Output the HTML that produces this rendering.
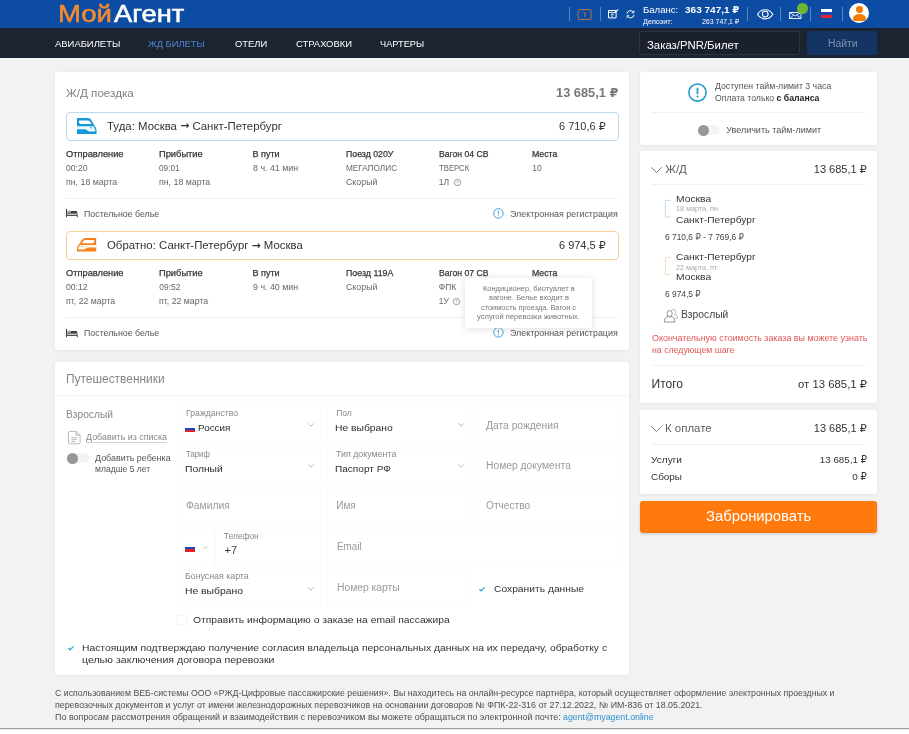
<!DOCTYPE html>
<html lang="ru">
<head>
<meta charset="utf-8">
<title>МойАгент — Ж/Д поездка</title>
<style>
html,body{margin:0;padding:0}
body{width:909px;height:734px;overflow:hidden;position:relative;background:#f2f2f2;font-family:'Liberation Sans','DejaVu Sans',sans-serif}
.t{position:absolute;white-space:pre;line-height:1;display:block;transform-origin:0 0}
.abs,.card,.fld,.hr,.sep{position:absolute}
.ar{font-family:'DejaVu Sans';font-weight:700;font-size:.95em;position:relative;top:-.5px}
.top{left:0;top:0;width:909px;height:28px;background:#0c4ca3}
.nav{left:0;top:28px;width:909px;height:30.3px;background:#1c2431}
.card{background:#fff;border-radius:3px;box-shadow:0 1px 5px rgba(0,0,0,.055)}
.hr{height:1px;background:#f0f0f0}
.sep{width:1px;top:7px;height:14px;background:rgba(255,255,255,.32)}
.fld{background:#fff;border:1px solid #fbfbfb;border-radius:2px;box-sizing:border-box;height:35.5px}
.route{position:absolute;left:66px;width:552.600px;height:29px;box-sizing:border-box;border-radius:4px;background:#fff}
svg{position:absolute;overflow:visible}
.foot{left:0;top:728px;width:909px;height:6px;background:linear-gradient(#9e9e9e 0 1px,#ebebeb 1px 2px,#fff 2px);}
</style>
</head>
<body>
<div id="page" style="position:absolute;left:0;top:0;width:909px;height:734px;will-change:transform">
<!-- header -->
<div class="abs top"></div>
<div class="abs nav"></div>
<div class="abs" style="left:0;top:58.6px;width:909px;height:1px;background:#f9f9f9"></div>
<i class="sep" style="left:568.5px"></i><i class="sep" style="left:600px"></i><i class="sep" style="left:747px"></i><i class="sep" style="left:780px"></i><i class="sep" style="left:810px"></i><i class="sep" style="left:841.5px"></i>
<!-- ticket icon -->
<svg style="left:577.2px;top:8.6px" width="14.500" height="11" viewBox="0 0 14.500 11"><path d="M2.300.600h10.800a.9.900 0 0 1 .9.900v8a.9.900 0 0 1-.9.900h-10.800a.9.900 0 0 1-.9-.9v-2.300l-1-1.700l1-1.700v-2.300a.9.900 0 0 1 .9-.9z" fill="none" stroke="#d5803a" stroke-width=".85"/><path d="M7.900 3.200v4.600" stroke="#d5803a" stroke-width=".9"/></svg>
<!-- doc icon -->
<svg style="left:608.4px;top:8.5px" width="11" height="9.5" viewBox="0 0 11 9.5"><path d="M.5 1.5h7.6v7.4h-7.6z" fill="none" stroke="#fff" stroke-width="1"/><path d="M.5 3.4h7.6M3 5.2h3M3 7h2" stroke="#fff" stroke-width=".9"/><path d="M6.8 3.6l3.4-3.2" stroke="#fff" stroke-width="1.1"/></svg>
<!-- refresh icon -->
<svg style="left:626px;top:9.5px" width="9" height="8.5" viewBox="0 0 9 8.5"><path d="M1 3.6a3.4 3.4 0 0 1 6.3-1.3M8 4.9a3.4 3.4 0 0 1-6.3 1.3" fill="none" stroke="#fff" stroke-width="1"/><path d="M7.9.6v2.2h-2.2M1.1 7.9v-2.2h2.2" fill="none" stroke="#fff" stroke-width=".9"/></svg>
<!-- eye -->
<svg style="left:757px;top:9.2px" width="16.5" height="10.6" viewBox="0 0 16.5 10.6"><path d="M.6 5.3c1.8-3 4.5-4.6 7.6-4.6s5.8 1.600 7.600 4.600c-1.800 3-4.500 4.600-7.600 4.600s-5.800-1.600-7.600-4.600z" fill="none" stroke="#fff" stroke-width="1.100"/><circle cx="8.2" cy="5.100" r="2.900" fill="none" stroke="#fff" stroke-width="1.100"/></svg>
<!-- mail -->
<svg style="left:789px;top:12px" width="12.5" height="7" viewBox="0 0 12.5 7"><path d="M.5.500h11.500v6h-11.500z" fill="none" stroke="#fff" stroke-width=".9"/><path d="M.5.500l5.750 3.400l5.750-3.400M.5 6.500l4.200-3.400M12 6.500l-4.200-3.400" fill="none" stroke="#fff" stroke-width=".8"/></svg>
<div class="abs" style="left:797.4px;top:3.2px;width:10.700px;height:10.700px;border-radius:50%;background:#70b62e"></div>
<!-- flag -->
<div class="abs" style="left:821.2px;top:9.4px;width:11.1px;height:8.7px;background:linear-gradient(#fff 0 33%,#1a47b8 33% 66%,#e0242b 66% 100%)"></div>
<!-- avatar -->
<div class="abs" style="left:849.300px;top:3.100px;width:20px;height:20px;border-radius:50%;background:#fff;overflow:hidden"><div class="abs" style="left:6.700px;top:3.300px;width:6.600px;height:6.600px;border-radius:50%;background:#f57c00"></div><div class="abs" style="left:3.700px;top:11.300px;width:12.600px;height:6.200px;border-radius:6.300px 6.300px 2px 2px / 4.500px 4.500px 2px 2px;background:#f57c00"></div></div>
<!-- search -->
<div class="abs" style="left:638.8px;top:31.3px;width:161px;height:24.2px;box-sizing:border-box;border:1px solid #2e3540;border-radius:2px;background:#1a212d"></div>
<div class="abs" style="left:807px;top:31.3px;width:70px;height:24.2px;border-radius:2px;background:#143464"></div>

<!-- left card 1 -->
<div class="card" style="left:54.700px;top:72.300px;width:574.300px;height:277.500px"></div>
<div class="route" style="top:111.9px;border:1px solid #b9d9ee"></div>
<div class="route" style="top:231px;border:1px solid #f7cf9d"></div>
<div class="hr" style="left:65.4px;top:197.600px;width:552px"></div>
<div class="hr" style="left:65.4px;top:316.500px;width:552px"></div>
<!-- train icons -->
<svg style="left:77.3px;top:118px" width="19.5" height="16" viewBox="0 0 19.5 16"><path d="M.5 0h10c2 0 3 .8 4 2.400l4 6.800c.7 1.200 1 2.200 1 3.300v3.500h-19.500v-15.500c0-.3.200-.5.500-.5z" fill="#1597d9"/><path d="M1.800 3.600c0-.7.500-1.100 1.200-1.100h7.600c1.200 0 2 .5 2.700 1.600l1.200 2h-10.400c-1.400 0-2.300-1-2.300-2.500z" fill="#fff"/><path d="M0 8.200h16.400l1.700 3c.4.900.3 2.400-.3 2.400h-5.300c-1.600 0-2.400-2.300-5-2.300h-7.500z" fill="#eafaff"/><ellipse cx="14" cy="9.700" rx="1" ry=".5" fill="#1b7fb8"/></svg>
<svg style="left:77.3px;top:238.100px" width="19.200" height="13.500" viewBox="0 0 19.5 16" preserveAspectRatio="none"><g transform="translate(19.5 0) scale(-1 1)"><path d="M.5 0h10c2 0 3 .8 4 2.400l4 6.800c.7 1.200 1 2.200 1 3.300v3.500h-19.500v-15.500c0-.3.200-.5.500-.5z" fill="#f5821f"/><path d="M1.800 3.600c0-.7.500-1.100 1.200-1.100h7.600c1.200 0 2 .5 2.700 1.600l1.200 2h-10.400c-1.400 0-2.300-1-2.300-2.500z" fill="#fff"/><path d="M0 8.200h16.400l1.700 3c.4.900.3 2.400-.3 2.400h-5.300c-1.600 0-2.400-2.300-5-2.300h-7.500z" fill="#fff6ea"/><ellipse cx="14" cy="9.700" rx="1" ry=".5" fill="#c96a14"/></g></svg>
<!-- bed icons -->
<svg style="left:66.300px;top:209.300px" width="11.800" height="8.200" viewBox="0 0 11.800 8.200"><path d="M.5 0v8.200M11.300 6.300v1.900" fill="none" stroke="#3c3c3c" stroke-width="1"/><path d="M.5 6.300h10.800" fill="none" stroke="#3c3c3c" stroke-width="1.200"/><path d="M1 4.300h10.300v1.600" fill="none" stroke="#3c3c3c" stroke-width=".7"/><rect x="1.900" y="2.200" width="2.500" height="1.900" rx=".7" fill="none" stroke="#3c3c3c" stroke-width=".7"/><path d="M4.900 2h4.900c.9 0 1.500.7 1.500 1.500v.8h-6.400z" fill="#3c3c3c"/></svg>
<svg style="left:66.300px;top:328.500px" width="11.800" height="8.200" viewBox="0 0 11.800 8.200"><path d="M.5 0v8.200M11.300 6.300v1.900" fill="none" stroke="#3c3c3c" stroke-width="1"/><path d="M.5 6.300h10.800" fill="none" stroke="#3c3c3c" stroke-width="1.200"/><path d="M1 4.300h10.300v1.600" fill="none" stroke="#3c3c3c" stroke-width=".7"/><rect x="1.900" y="2.200" width="2.500" height="1.900" rx=".7" fill="none" stroke="#3c3c3c" stroke-width=".7"/><path d="M4.900 2h4.900c.9 0 1.500.7 1.500 1.500v.8h-6.400z" fill="#3c3c3c"/></svg>
<!-- info icons -->
<svg style="left:493px;top:208.200px" width="10.800" height="10.800" viewBox="0 0 10 10"><circle cx="5" cy="5" r="4.400" fill="none" stroke="#3aa0d8" stroke-width=".9"/><path d="M5 2.500v3.300M5 6.700v1" stroke="#3aa0d8" stroke-width=".9"/></svg>
<svg style="left:493px;top:327.400px" width="10.800" height="10.800" viewBox="0 0 10 10"><circle cx="5" cy="5" r="4.400" fill="none" stroke="#3aa0d8" stroke-width=".9"/><path d="M5 2.500v3.300M5 6.700v1" stroke="#3aa0d8" stroke-width=".9"/></svg>
<!-- question icons -->
<svg style="left:453.600px;top:179px" width="7" height="7" viewBox="0 0 7 7"><circle cx="3.500" cy="3.500" r="3.200" fill="none" stroke="#777" stroke-width=".7"/><path d="M2.700 2.700c0-1 1.700-1 1.700 0c0 .600-.8.600-.8 1.300M3.600 4.700v.5" fill="none" stroke="#777" stroke-width=".55"/></svg>
<svg style="left:453.300px;top:298.300px" width="7" height="7" viewBox="0 0 7 7"><circle cx="3.500" cy="3.500" r="3.200" fill="none" stroke="#777" stroke-width=".7"/><path d="M2.700 2.700c0-1 1.700-1 1.700 0c0 .600-.8.600-.8 1.300M3.600 4.700v.5" fill="none" stroke="#777" stroke-width=".55"/></svg>

<!-- left card 2 -->
<div class="card" style="left:54.700px;top:361.600px;width:574.300px;height:313.600px"></div>
<div class="hr" style="left:54.4px;top:394.800px;width:574.6px;background:#f4f4f4"></div>
<!-- fields -->
<div class="fld" style="left:176.400px;top:406.400px;width:144.300px"></div>
<div class="fld" style="left:327.400px;top:406.400px;width:144px"></div>
<div class="fld" style="left:478.400px;top:406.400px;width:140px"></div>
<div class="fld" style="left:176.400px;top:447.800px;width:144.300px"></div>
<div class="fld" style="left:327.400px;top:447.800px;width:144px"></div>
<div class="fld" style="left:478.400px;top:447.800px;width:140px"></div>
<div class="fld" style="left:176.400px;top:489px;width:144.300px"></div>
<div class="fld" style="left:327.400px;top:489px;width:144px"></div>
<div class="fld" style="left:478.400px;top:489px;width:140px"></div>
<div class="fld" style="left:176.400px;top:530px;width:39px"></div>
<div class="fld" style="left:215.400px;top:530px;width:105.300px"></div>
<div class="fld" style="left:327.400px;top:530px;width:291px"></div>
<div class="fld" style="left:176.400px;top:570.300px;width:144.300px"></div>
<div class="fld" style="left:327.400px;top:570.300px;width:144px"></div>
<!-- chevrons -->
<svg style="left:308px;top:423px" width="6" height="4" viewBox="0 0 6 4"><path d="M.3.400l2.700 2.800l2.700-2.800" fill="none" stroke="#aaa" stroke-width=".8"/></svg>
<svg style="left:458.300px;top:423px" width="6" height="4" viewBox="0 0 6 4"><path d="M.3.400l2.700 2.800l2.700-2.800" fill="none" stroke="#aaa" stroke-width=".8"/></svg>
<svg style="left:308px;top:463.500px" width="6" height="4" viewBox="0 0 6 4"><path d="M.3.400l2.700 2.800l2.700-2.800" fill="none" stroke="#aaa" stroke-width=".8"/></svg>
<svg style="left:458.300px;top:463.500px" width="6" height="4" viewBox="0 0 6 4"><path d="M.3.400l2.700 2.800l2.700-2.800" fill="none" stroke="#aaa" stroke-width=".8"/></svg>
<svg style="left:203px;top:545.900px" width="5" height="3.300" viewBox="0 0 6 4"><path d="M.3.400l2.700 2.800l2.700-2.800" fill="none" stroke="#aaa" stroke-width=".8"/></svg>
<svg style="left:308.300px;top:586.500px" width="6" height="4" viewBox="0 0 6 4"><path d="M.3.400l2.700 2.800l2.700-2.800" fill="none" stroke="#aaa" stroke-width=".8"/></svg>
<!-- small flags -->
<div class="abs" style="left:184.900px;top:425.800px;width:10.300px;height:6.300px;background:linear-gradient(#fff 0 30%,#1a47b8 30% 64%,#e0242b 64% 100%)"></div>
<div class="abs" style="left:184.700px;top:545.200px;width:10.500px;height:6.600px;background:linear-gradient(#fff 0 30%,#1a47b8 30% 64%,#e0242b 64% 100%)"></div>
<!-- doc icon + underline -->
<svg style="left:68.300px;top:430.500px" width="12.500" height="13.200" viewBox="0 0 12.500 13.200"><path d="M1.500.400h6.500l4.100 3.600v7.800c0 .6-.4 1-1 1h-9.600c-.6 0-1-.4-1-1v-10.400c0-.6.400-1 1-1z" fill="none" stroke="#aaa" stroke-width=".8"/><path d="M7.900.500v3.600h4.100M3.300 6.700h5.900M3.300 8.700h5.900M3.300 10.600h3.600" fill="none" stroke="#aaa" stroke-width=".8"/></svg>
<div class="abs" style="left:85.900px;top:442px;width:81px;height:1px;background:#d2d2d2"></div>
<!-- toggle -->
<div class="abs" style="left:67px;top:453.300px;width:21.500px;height:9.600px;border-radius:5px;background:#f3f3f3"></div>
<div class="abs" style="left:67px;top:452.600px;width:11px;height:11px;border-radius:50%;background:#979797"></div>
<!-- checkbox + checks -->
<div class="abs" style="left:177px;top:614.700px;width:9.500px;height:10.300px;box-sizing:border-box;border:1px solid #f3f3f3;border-radius:2px;background:#fff"></div>
<svg style="left:479.200px;top:586.800px" width="6" height="4.500" viewBox="0 0 6 4.500"><path d="M.4 2.300l1.700 1.600l3.400-3.500" fill="none" stroke="#2a9fd8" stroke-width="1.300"/></svg>
<svg style="left:68px;top:645.500px" width="6" height="4.500" viewBox="0 0 6 4.500"><path d="M.4 2.300l1.700 1.600l3.400-3.500" fill="none" stroke="#2a9fd8" stroke-width="1.300"/></svg>

<!-- right cards -->
<div class="card" style="left:640.400px;top:72.400px;width:236.600px;height:72.300px"></div>
<div class="hr" style="left:651.500px;top:112px;width:214.500px"></div>
<svg style="left:688.200px;top:82.500px" width="19" height="19" viewBox="0 0 19 19"><circle cx="9.500" cy="9.500" r="8.600" fill="none" stroke="#2196c9" stroke-width="1.550"/><path d="M9.500 4.800v6.400" stroke="#2196c9" stroke-width="1.800"/><circle cx="9.500" cy="13.500" r="1.050" fill="#2196c9"/></svg>
<div class="abs" style="left:697.500px;top:125.200px;width:22.300px;height:10px;border-radius:5px;background:#f4f4f4"></div>
<div class="abs" style="left:697.500px;top:124.700px;width:11px;height:11px;border-radius:50%;background:#979797"></div>

<div class="card" style="left:640.400px;top:150.800px;width:236.600px;height:252.200px"></div>
<svg style="left:650.900px;top:167.300px" width="11" height="6" viewBox="0 0 11 6"><path d="M.3.300l5.200 5.200l5.200-5.200" fill="none" stroke="#7c7c7c" stroke-width=".95"/></svg>
<div class="hr" style="left:651.500px;top:184.300px;width:214.500px"></div>
<svg style="left:665px;top:199.600px" width="6" height="17.500" viewBox="0 0 6 17.500"><path d="M5.800.400h-5.400v16.700h5.400" fill="none" stroke="#a3cbe8" stroke-width=".7"/></svg>
<svg style="left:665px;top:257px" width="6" height="18" viewBox="0 0 6 18"><path d="M5.800.400h-5.400v17.200h5.400" fill="none" stroke="#f8cfa2" stroke-width=".7"/></svg>
<!-- person icon -->
<svg style="left:663.900px;top:308.500px" width="14" height="13.500" viewBox="0 0 14 13.500"><path d="M7.200 1.600c.5-.8 1.300-1.200 2.100-1.200c1.400 0 2.400 1.200 2.400 2.800c0 1-.4 1.900-1 2.400c1.600.5 2.800 1.600 2.900 3.600h-2" fill="none" stroke="#999" stroke-width=".7"/><ellipse cx="5.600" cy="4.500" rx="2.600" ry="3" fill="#fff" stroke="#777" stroke-width=".8"/><path d="M.4 13v-1.400c0-2.300 1.700-3.800 3.700-4.100c.9.600 2.100.6 3 0c2 .3 3.700 1.800 3.700 4.100v1.400z" fill="#fff" stroke="#777" stroke-width=".8"/></svg>
<div class="hr" style="left:651.500px;top:365.300px;width:214.500px"></div>

<div class="card" style="left:640.400px;top:410.200px;width:236.600px;height:83.400px"></div>
<svg style="left:650.900px;top:426.100px" width="11" height="6" viewBox="0 0 11 6"><path d="M.3.300l5.200 5.200l5.200-5.200" fill="none" stroke="#7c7c7c" stroke-width=".95"/></svg>
<div class="hr" style="left:651.500px;top:444px;width:214.500px"></div>
<div class="abs" style="left:640.400px;top:501.300px;width:236.600px;height:31.600px;border-radius:3px;background:#ff7a0c;box-shadow:0 1px 3px rgba(0,0,0,.18)"></div>

<div class="abs foot"></div>

<span class="t logo" style="left:57.6px;top:1.5px;font-size:24px;color:#f28b30;transform:scaleX(1.146);-webkit-text-stroke:.55px #f28b30;">Мой</span>
<span class="t logo" style="left:113.7px;top:1.5px;font-size:24px;color:#fff;transform:scaleX(1.137);-webkit-text-stroke:.55px #fff;">Агент</span>
<span class="t" style="left:55.0px;top:39.3px;font-size:9.6px;color:#fff;transform:scaleX(0.984);">АВИАБИЛЕТЫ</span>
<span class="t" style="left:148.2px;top:39.3px;font-size:9.6px;color:#4c86cf;transform:scaleX(0.975);">ЖД БИЛЕТЫ</span>
<span class="t" style="left:234.5px;top:39.3px;font-size:9.6px;color:#fff;transform:scaleX(0.978);">ОТЕЛИ</span>
<span class="t" style="left:295.5px;top:39.3px;font-size:9.6px;color:#fff;transform:scaleX(0.980);">СТРАХОВКИ</span>
<span class="t" style="left:379.7px;top:39.3px;font-size:9.6px;color:#fff;transform:scaleX(0.960);">ЧАРТЕРЫ</span>
<span class="t" style="left:642.5px;top:4.8px;font-size:9.5px;color:#fff;transform:scaleX(1.006);">Баланс:</span>
<span class="t" style="left:685.0px;top:4.8px;font-size:9.5px;color:#fff;font-weight:700;transform:scaleX(1.054);">363 747,1 ₽</span>
<span class="t" style="left:642.5px;top:17.5px;font-size:7px;color:#fff;transform:scaleX(1.035);">Депозит:</span>
<span class="t" style="left:702.0px;top:17.5px;font-size:7px;color:#fff;transform:scaleX(0.993);">263 747,1 ₽</span>
<span class="t" style="left:647.0px;top:39.8px;font-size:11.5px;color:#fff;transform:scaleX(0.988);">Заказ/PNR/Билет</span>
<span class="t" style="left:827.5px;top:39.0px;font-size:10px;color:#8090aa;transform:scaleX(1.040);">Найти</span>
<span class="t" style="left:65.8px;top:87.9px;font-size:11.5px;color:#808080;transform:scaleX(1.012);">Ж/Д поездка</span>
<span class="t" style="left:555.6px;top:86.9px;font-size:12px;color:#787878;font-weight:700;transform:scaleX(1.068);">13 685,1 ₽</span>
<span class="t" style="left:106.9px;top:120.9px;font-size:11.2px;color:#333;transform:scaleX(1.020);">Туда: Москва <b class="ar">→</b> Санкт-Петербург</span>
<span class="t" style="left:559.4px;top:120.9px;font-size:11.2px;color:#333;transform:scaleX(0.980);">6 710,6 ₽</span>
<span class="t" style="left:106.9px;top:240.3px;font-size:11.2px;color:#333;transform:scaleX(1.019);">Обратно: Санкт-Петербург <b class="ar">→</b> Москва</span>
<span class="t" style="left:559.4px;top:240.3px;font-size:11.2px;color:#333;transform:scaleX(0.980);">6 974,5 ₽</span>
<span class="t" style="left:65.8px;top:150.3px;font-size:9px;color:#363636;transform:scaleX(1.030);-webkit-text-stroke:.25px #363636;">Отправление</span>
<span class="t" style="left:159.3px;top:150.3px;font-size:9px;color:#363636;transform:scaleX(1.034);-webkit-text-stroke:.25px #363636;">Прибытие</span>
<span class="t" style="left:252.5px;top:150.3px;font-size:9px;color:#363636;-webkit-text-stroke:.25px #363636;">В пути</span>
<span class="t" style="left:345.6px;top:150.3px;font-size:9px;color:#363636;transform:scaleX(0.973);-webkit-text-stroke:.25px #363636;">Поезд 020У</span>
<span class="t" style="left:438.8px;top:150.3px;font-size:9px;color:#363636;transform:scaleX(0.959);-webkit-text-stroke:.25px #363636;">Вагон 04 СВ</span>
<span class="t" style="left:532.3px;top:150.3px;font-size:9px;color:#363636;transform:scaleX(0.968);-webkit-text-stroke:.25px #363636;">Места</span>
<span class="t" style="left:65.8px;top:164.0px;font-size:8.5px;color:#666;transform:scaleX(1.015);">00:20</span>
<span class="t" style="left:159.3px;top:164.0px;font-size:8.5px;color:#666;transform:scaleX(0.973);">09:01</span>
<span class="t" style="left:252.5px;top:164.0px;font-size:8.5px;color:#666;transform:scaleX(1.041);">8 ч. 41 мин</span>
<span class="t" style="left:345.6px;top:164.0px;font-size:8.5px;color:#666;transform:scaleX(0.968);">МЕГАПОЛИС</span>
<span class="t" style="left:438.8px;top:164.0px;font-size:8.5px;color:#666;transform:scaleX(0.910);">ТВЕРСК</span>
<span class="t" style="left:532.3px;top:164.0px;font-size:8.5px;color:#666;">10</span>
<span class="t" style="left:65.8px;top:178.0px;font-size:8.5px;color:#666;transform:scaleX(1.035);">пн, 18 марта</span>
<span class="t" style="left:159.3px;top:178.0px;font-size:8.5px;color:#666;transform:scaleX(1.035);">пн, 18 марта</span>
<span class="t" style="left:345.6px;top:178.0px;font-size:8.5px;color:#666;transform:scaleX(1.037);">Скорый</span>
<span class="t" style="left:438.8px;top:178.0px;font-size:8.5px;color:#666;">1Л</span>
<span class="t" style="left:65.8px;top:269.3px;font-size:9px;color:#363636;transform:scaleX(1.030);-webkit-text-stroke:.25px #363636;">Отправление</span>
<span class="t" style="left:159.3px;top:269.3px;font-size:9px;color:#363636;transform:scaleX(1.034);-webkit-text-stroke:.25px #363636;">Прибытие</span>
<span class="t" style="left:252.5px;top:269.3px;font-size:9px;color:#363636;-webkit-text-stroke:.25px #363636;">В пути</span>
<span class="t" style="left:345.6px;top:269.3px;font-size:9px;color:#363636;transform:scaleX(0.981);-webkit-text-stroke:.25px #363636;">Поезд 119А</span>
<span class="t" style="left:438.8px;top:269.3px;font-size:9px;color:#363636;transform:scaleX(0.959);-webkit-text-stroke:.25px #363636;">Вагон 07 СВ</span>
<span class="t" style="left:532.3px;top:269.3px;font-size:9px;color:#363636;transform:scaleX(0.968);-webkit-text-stroke:.25px #363636;">Места</span>
<span class="t" style="left:65.8px;top:283.0px;font-size:8.5px;color:#666;transform:scaleX(1.015);">00:12</span>
<span class="t" style="left:159.3px;top:283.0px;font-size:8.5px;color:#666;">09:52</span>
<span class="t" style="left:252.5px;top:283.0px;font-size:8.5px;color:#666;transform:scaleX(1.041);">9 ч. 40 мин</span>
<span class="t" style="left:345.6px;top:283.0px;font-size:8.5px;color:#666;transform:scaleX(1.037);">Скорый</span>
<span class="t" style="left:438.8px;top:283.0px;font-size:8.5px;color:#666;">ФПК</span>
<span class="t" style="left:65.8px;top:297.0px;font-size:8.5px;color:#666;transform:scaleX(1.031);">пт, 22 марта</span>
<span class="t" style="left:159.3px;top:297.0px;font-size:8.5px;color:#666;transform:scaleX(1.031);">пт, 22 марта</span>
<span class="t" style="left:438.8px;top:297.0px;font-size:8.5px;color:#666;">1У</span>
<span class="t" style="left:84.1px;top:209.8px;font-size:9px;color:#555;transform:scaleX(0.979);">Постельное белье</span>
<span class="t" style="left:510.3px;top:209.8px;font-size:9px;color:#555;transform:scaleX(0.989);">Электронная регистрация</span>
<span class="t" style="left:84.1px;top:329.0px;font-size:9px;color:#555;transform:scaleX(0.979);">Постельное белье</span>
<span class="t" style="left:510.3px;top:329.0px;font-size:9px;color:#555;transform:scaleX(0.989);">Электронная регистрация</span>
<span class="t" style="left:65.8px;top:373.2px;font-size:12px;color:#858585;transform:scaleX(0.993);">Путешественники</span>
<span class="t" style="left:65.8px;top:409.7px;font-size:10px;color:#888;transform:scaleX(1.020);">Взрослый</span>
<span class="t" style="left:85.9px;top:432.7px;font-size:9px;color:#888;transform:scaleX(0.989);">Добавить из списка</span>
<span class="t" style="left:94.7px;top:453.6px;font-size:9px;color:#555;transform:scaleX(0.990);">Добавить ребенка</span>
<span class="t" style="left:94.7px;top:464.6px;font-size:9px;color:#555;transform:scaleX(0.953);">младше 5 лет</span>
<span class="t" style="left:185.7px;top:409.0px;font-size:8.5px;color:#888;transform:scaleX(1.023);">Гражданство</span>
<span class="t" style="left:336.2px;top:409.0px;font-size:8.5px;color:#888;">Пол</span>
<span class="t" style="left:185.7px;top:449.6px;font-size:8.5px;color:#888;transform:scaleX(0.915);">Тариф</span>
<span class="t" style="left:336.2px;top:449.6px;font-size:8.5px;color:#888;transform:scaleX(1.040);">Тип документа</span>
<span class="t" style="left:224.3px;top:531.8px;font-size:8.5px;color:#888;transform:scaleX(0.984);">Телефон</span>
<span class="t" style="left:185.3px;top:572.4px;font-size:8.5px;color:#888;transform:scaleX(1.036);">Бонусная карта</span>
<span class="t" style="left:198.3px;top:423.2px;font-size:9.5px;color:#2c2c2c;transform:scaleX(1.040);">Россия</span>
<span class="t" style="left:335.0px;top:423.2px;font-size:9.5px;color:#2c2c2c;transform:scaleX(1.085);">Не выбрано</span>
<span class="t" style="left:184.9px;top:463.6px;font-size:9.5px;color:#2c2c2c;transform:scaleX(1.085);">Полный</span>
<span class="t" style="left:335.0px;top:463.6px;font-size:9.5px;color:#2c2c2c;transform:scaleX(1.060);">Паспорт РФ</span>
<span class="t" style="left:184.5px;top:586.3px;font-size:9.5px;color:#2c2c2c;transform:scaleX(1.088);">Не выбрано</span>
<span class="t" style="left:486.4px;top:420.8px;font-size:10px;color:#999;transform:scaleX(1.029);">Дата рождения</span>
<span class="t" style="left:486.4px;top:460.9px;font-size:10px;color:#999;transform:scaleX(1.031);">Номер документа</span>
<span class="t" style="left:185.7px;top:501.4px;font-size:10px;color:#999;transform:scaleX(1.031);">Фамилия</span>
<span class="t" style="left:336.2px;top:501.4px;font-size:10px;color:#999;">Имя</span>
<span class="t" style="left:486.4px;top:501.2px;font-size:10px;color:#999;transform:scaleX(1.016);">Отчество</span>
<span class="t" style="left:336.6px;top:542.4px;font-size:10px;color:#999;transform:scaleX(0.991);">Email</span>
<span class="t" style="left:336.6px;top:583.0px;font-size:10px;color:#999;transform:scaleX(1.031);">Номер карты</span>
<span class="t" style="left:224.6px;top:545.0px;font-size:11px;color:#3c3c3c;">+7</span>
<span class="t" style="left:494.0px;top:584.0px;font-size:9.5px;color:#333;transform:scaleX(1.081);">Сохранить данные</span>
<span class="t" style="left:192.9px;top:615.4px;font-size:9.5px;color:#333;transform:scaleX(1.087);">Отправить информацию о заказе на email пассажира</span>
<span class="t" style="left:82.0px;top:643.3px;font-size:9.5px;color:#333;transform:scaleX(1.086);">Настоящим подтверждаю получение согласия владельца персональных данных на их передачу, обработку с</span>
<span class="t" style="left:82.0px;top:654.9px;font-size:9.5px;color:#333;transform:scaleX(1.111);">целью заключения договора перевозки</span>
<span class="t" style="left:55.0px;top:689.4px;font-size:8.8px;color:#505050;transform:scaleX(0.996);">С использованием ВЕБ-системы ООО «РЖД-Цифровые пассажирские решения». Вы находитесь на онлайн-ресурсе партнёра, который осуществляет оформление электронных проездных и</span>
<span class="t" style="left:55.0px;top:701.1px;font-size:8.8px;color:#505050;transform:scaleX(1.005);">перевозочных документов и услуг от имени железнодорожных перевозчиков на основании договоров № ФПК-22-316 от 27.12.2022, № ИМ-836 от 18.05.2021.</span>
<span class="t" style="left:55.0px;top:713.0px;font-size:8.8px;color:#505050;transform:scaleX(1.018);">По вопросам рассмотрения обращений и взаимодействия с перевозчиком вы можете обращаться по электронной почте:</span>
<span class="t" style="left:563.0px;top:713.0px;font-size:8.8px;color:#2b8fd0;">agent@myagent.online</span>
<span class="t" style="left:714.8px;top:82.2px;font-size:9px;color:#555;transform:scaleX(0.970);">Доступен тайм-лимит 3 часа</span>
<span class="t" style="left:714.8px;top:93.8px;font-size:9px;color:#555;transform:scaleX(0.966);">Оплата только <b style="color:#222">с баланса</b></span>
<span class="t" style="left:726.3px;top:126.0px;font-size:9px;color:#555;">Увеличить тайм-лимит</span>
<span class="t" style="left:665.3px;top:164.0px;font-size:11.5px;color:#606060;">Ж/Д</span>
<span class="t" style="left:813.8px;top:164.0px;font-size:11px;color:#333;">13 685,1 ₽</span>
<span class="t" style="left:676.3px;top:193.5px;font-size:9.6px;color:#333;transform:scaleX(1.074);">Москва</span>
<span class="t" style="left:676.3px;top:205.0px;font-size:7.4px;color:#aaa;transform:scaleX(0.976);">18 марта, пн</span>
<span class="t" style="left:676.3px;top:214.6px;font-size:9.6px;color:#333;transform:scaleX(1.059);">Санкт-Петербург</span>
<span class="t" style="left:665.3px;top:232.7px;font-size:9.3px;color:#444;transform:scaleX(0.904);">6 710,6 ₽ - 7 769,6 ₽</span>
<span class="t" style="left:676.3px;top:251.7px;font-size:9.6px;color:#333;transform:scaleX(1.059);">Санкт-Петербург</span>
<span class="t" style="left:676.3px;top:263.5px;font-size:7.4px;color:#aaa;transform:scaleX(0.973);">22 марта, пт</span>
<span class="t" style="left:676.3px;top:272.4px;font-size:9.6px;color:#333;transform:scaleX(1.074);">Москва</span>
<span class="t" style="left:665.3px;top:289.9px;font-size:9.3px;color:#444;transform:scaleX(0.903);">6 974,5 ₽</span>
<span class="t" style="left:681.2px;top:309.7px;font-size:10px;color:#444;transform:scaleX(1.028);">Взрослый</span>
<span class="t" style="left:651.5px;top:334.2px;font-size:9px;color:#e25555;transform:scaleX(0.990);">Окончательную стоимость заказа вы можете узнать</span>
<span class="t" style="left:651.5px;top:345.8px;font-size:9px;color:#e25555;transform:scaleX(0.972);">на следующем шаге</span>
<span class="t" style="left:651.5px;top:378.0px;font-size:12px;color:#333;">Итого</span>
<span class="t" style="left:797.8px;top:379.0px;font-size:11.3px;color:#333;transform:scaleX(1.005);">от 13 685,1 ₽</span>
<span class="t" style="left:665.3px;top:422.7px;font-size:11.5px;color:#606060;transform:scaleX(0.996);">К оплате</span>
<span class="t" style="left:813.8px;top:422.7px;font-size:11px;color:#333;">13 685,1 ₽</span>
<span class="t" style="left:651.0px;top:454.8px;font-size:9.8px;color:#333;transform:scaleX(1.029);">Услуги</span>
<span class="t" style="left:819.8px;top:454.8px;font-size:9.8px;color:#333;">13 685,1 ₽</span>
<span class="t" style="left:651.0px;top:471.8px;font-size:9.8px;color:#333;transform:scaleX(1.012);">Сборы</span>
<span class="t" style="left:852.3px;top:471.8px;font-size:9.8px;color:#333;">0 ₽</span>
<span class="t" style="left:705.7px;top:509.3px;font-size:14.5px;color:#fff;transform:scaleX(1.022);">Забронировать</span>

<!-- tooltip -->
<div class="abs" style="left:465.200px;top:278.300px;width:127.200px;height:49.500px;background:#fff;border-radius:2px;box-shadow:0 1px 8px rgba(0,0,0,.13)"></div>
<span class="t tt" style="left:482.9px;top:284.8px;font-size:8px;color:#777;transform:scaleX(0.932);">Кондиционер, биотуалет в</span>
<span class="t tt" style="left:488.8px;top:294.4px;font-size:8px;color:#777;transform:scaleX(0.933);">вагоне. Белье входит в</span>
<span class="t tt" style="left:481.3px;top:304.0px;font-size:8px;color:#777;transform:scaleX(0.925);">стоимость проезда. Вагон с</span>
<span class="t tt" style="left:477.3px;top:313.4px;font-size:8px;color:#777;transform:scaleX(0.946);">услугой перевозки животных.</span>
</div>
</body>
</html>
